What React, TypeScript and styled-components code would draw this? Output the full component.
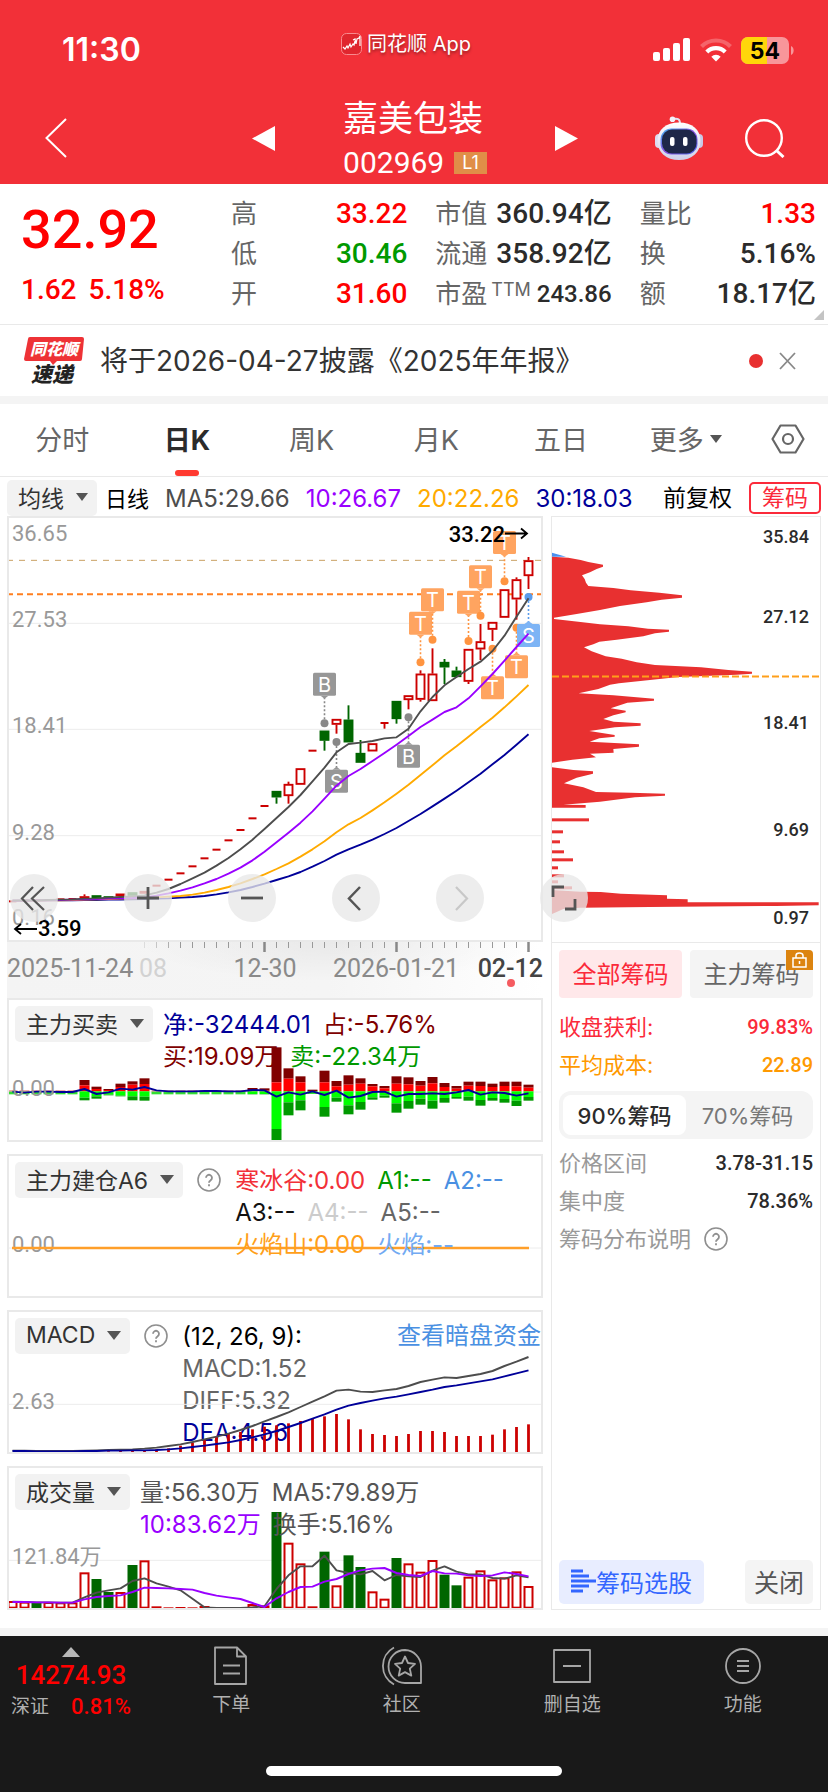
import React from "react";
import styled, { createGlobalStyle, css } from "styled-components";

const ui = `"Inter", "Noto Sans CJK SC", sans-serif`;
const num = `"Roboto", "Noto Sans CJK SC", sans-serif`;

const c = {
  header: "#f23038",
  red: "#ff0000",
  crimson: "#fb2a3a",
  green: "#009900",
  ink: "#2b2b2b",
  grey: "#666666",
  pale: "#999999",
  line: "#e9e9e9",
  fill: "#f4f4f4",
  bull: "#cc0000",
  bear: "#006600",
  navy: "#000099",
  violet: "#9900ff",
  amber: "#ffaa00",
  slate: "#4d4d4d",
  orange: "#ff9900",
  blue: "#4a90e2",
};

const GlobalStyle = createGlobalStyle`
  *, *::before, *::after { box-sizing: border-box; }
  body { margin: 0; background: #fff; color: ${c.ink}; font-family: ${ui}; }
  button { margin: 0; padding: 0; border: 0; background: none; color: inherit; font: inherit; cursor: pointer; }
  h1, p, dl, dd { margin: 0; font-weight: inherit; font-size: inherit; }
  svg { display: block; flex: none; }
`;

/* ---------- header ---------- */

const Page = styled.div`
  min-height: 100vh;
  display: flex;
  flex-direction: column;
`;

const Header = styled.header`
  background: ${c.header};
  color: #fff;
`;

const StatusBar = styled.div`
  display: grid;
  grid-template-columns: 1fr auto 1fr;
  align-items: center;
  height: 92px;
  padding: 8px 34px 0 18px;
`;

const Clock = styled.time`
  margin-left: 44px;
  font-size: 32px;
  line-height: 40px;
  font-weight: 600;
`;

const AppName = styled.div`
  display: flex;
  align-items: center;
  gap: 5px;
  padding-bottom: 12px;
  font-size: 20px;
  line-height: 24px;
  text-shadow: 0 2px 3px rgba(0, 0, 0, 0.4);
`;

const StatusIcons = styled.div`
  display: flex;
  justify-content: flex-end;
  align-items: center;
  gap: 9px;
`;

const TitleBar = styled.div`
  display: grid;
  grid-template-columns: 1fr auto 1fr;
  align-items: center;
  height: 92px;
  padding: 0 43px 0 45px;
`;

const TitleGroup = styled.div`
  display: flex;
  align-items: center;
  gap: 68px;
`;

const StockName = styled.h1`
  font-size: 35px;
  line-height: 46px;
`;

const StockCode = styled.div`
  display: flex;
  align-items: center;
  gap: 10px;
  margin-top: 4px;
  font: 400 30px/36px ${num};
`;

const LevelBadge = styled.span`
  padding: 0 8px;
  background: #e08e48;
  font: 400 18px/22px ${ui};
`;

const HeaderActions = styled.div`
  display: flex;
  justify-content: flex-end;
  align-items: center;
  gap: 42px;
`;

/* ---------- quote ---------- */

const Quote = styled.section`
  position: relative;
  display: grid;
  grid-template-columns: 182px repeat(3, 1fr);
  column-gap: 28px;
  padding: 10px 12px 10px 21px;
  border-bottom: 1px solid ${c.line};
`;

const Price = styled.div`
  color: ${c.red};
  font: 500 28px/36px ${num};
`;

const LastPrice = styled.div`
  font-size: 54px;
  line-height: 72px;
`;

const Change = styled.div`
  display: flex;
  gap: 12px;
  padding-top: 6px;
`;

const Stats = styled.dl`
  display: flex;
  flex-direction: column;
`;

const Stat = styled.div`
  display: flex;
  justify-content: space-between;
  line-height: 40px;
`;

const StatLabel = styled.dt`
  display: flex;
  color: ${c.grey};
  font-size: 26px;
`;

const Tiny = styled.span`
  margin-left: 4px;
  font-size: 18px;
  line-height: 32px;
`;

const StatValue = styled.dd<{ $color?: string; $small?: boolean }>`
  color: ${(p) => p.$color ?? c.ink};
  font-family: ${num};
  font-weight: 500;
  font-size: ${(p) => (p.$small ? 24 : 28)}px;
`;

const Corner = styled.span`
  position: absolute;
  right: 4px;
  bottom: 4px;
  border: 5px solid #c4c4c4;
  border-top-color: transparent;
  border-left-color: transparent;
`;

/* ---------- news and tabs ---------- */

const News = styled.section`
  display: flex;
  align-items: center;
  height: 79px;
  padding: 0 32px 0 24px;
  border-bottom: 8px solid ${c.fill};
`;

const NewsLink = styled.a`
  flex: 1;
  margin-left: 15px;
  color: #333;
  font-size: 28px;
  line-height: 40px;
  text-decoration: none;
`;

const UnreadDot = styled.span`
  width: 14px;
  height: 14px;
  margin-right: 16px;
  border-radius: 50%;
  background: #e83030;
`;

const Tabs = styled.nav`
  display: grid;
  grid-template-columns: repeat(6, 1fr) 80px;
  height: 73px;
  border-bottom: 1px solid ${c.line};
`;

const Tab = styled.button<{ $active?: boolean }>`
  position: relative;
  display: flex;
  align-items: center;
  justify-content: center;
  gap: 6px;
  padding-bottom: 3px;
  color: ${(p) => (p.$active ? c.ink : c.grey)};
  font-size: 27px;
  font-weight: ${(p) => (p.$active ? 700 : 400)};
  ${(p) =>
    p.$active &&
    css`
      &::after {
        content: "";
        position: absolute;
        bottom: 0;
        width: 24px;
        height: 6px;
        border-radius: 3px;
        background: #ff3a30;
      }
    `}
`;

const Arrow = styled.span<{ $small?: boolean }>`
  border: ${(p) => (p.$small ? 6 : 7)}px solid transparent;
  border-top: ${(p) => (p.$small ? 8 : 9)}px solid #555;
  border-bottom: 0;
`;

/* ---------- moving-average toolbar ---------- */

const Toolbar = styled.div`
  display: flex;
  align-items: center;
  height: 39px;
  padding: 2px 7px 0;
`;

const Picker = styled.button`
  display: flex;
  align-items: center;
  gap: 12px;
  height: 36px;
  padding: 0 9px 2px 11px;
  border-radius: 5px;
  background: #f2f2f2;
  color: #333;
  font-size: 23px;
  white-space: nowrap;
`;

const Averages = styled.div`
  display: flex;
  align-items: baseline;
  flex: 1;
  gap: 16px;
  padding: 0 0 2px 8px;
  font-size: 24px;
  white-space: nowrap;
`;

const Period = styled.span`
  color: #000;
  font-size: 22px;
`;

const Ink = styled.span<{ $color: string }>`
  color: ${(p) => p.$color};
`;

const Adjust = styled.button`
  padding-bottom: 3px;
  color: #000;
  font-size: 23px;
`;

const ChipToggle = styled.button`
  height: 32px;
  margin-left: 17px;
  padding: 0 11px;
  border: 2px solid ${c.crimson};
  border-radius: 5px;
  color: ${c.crimson};
  font-size: 23px;
  line-height: 26px;
`;

/* ---------- panels ---------- */

const Body = styled.main`
  position: relative;
  display: grid;
  grid-template-columns: 536fr 270fr;
  gap: 8px;
  padding: 0 7px 18px;
`;

const Charts = styled.div`
  min-width: 0;
`;

const Frame = styled.section`
  position: relative;
  border: 2px solid ${c.line};

  & + & {
    margin-top: 12px;
  }
`;

const Plot = styled.svg<{ $over?: boolean }>`
  position: relative;
  z-index: ${(p) => (p.$over ? 1 : 0)};
  width: 100%;
  height: auto;
  pointer-events: none;
`;

const FrameHeader = styled.div`
  position: absolute;
  top: 6px;
  left: 6px;
  right: 0;
  display: flex;
  align-items: flex-start;
  gap: 10px;
`;

const Readings = styled.div`
  padding-top: 3px;
  font-size: 24px;
  line-height: 32px;
  white-space: nowrap;
`;

const ReadingRow = styled.div`
  display: flex;
  gap: 12px;
`;

const HelpButton = styled.button`
  height: 36px;
  margin: 0 4px;
`;

const DarkPoolLink = styled.a`
  margin-left: auto;
  color: ${c.blue};
  font-size: 24px;
  line-height: 36px;
  text-decoration: none;
`;

const Controls = styled.div`
  position: absolute;
  z-index: 2;
  top: 358px;
  left: 10px;
  display: flex;
  gap: 56px;
`;

const Round = styled.button`
  width: 48px;
  height: 48px;
  border-radius: 50%;
  background: rgba(232, 232, 232, 0.78);

  &:first-child {
    margin-right: 10px;
  }
`;

/* ---------- chip distribution ---------- */

const ChipPanel = styled.aside`
  display: flex;
  flex-direction: column;
  min-width: 0;
  border: 1px solid ${c.line};
`;

const ChipPlot = styled.svg`
  width: 100%;
  height: auto;
  border-bottom: 1px solid ${c.line};
`;

const ChipBody = styled.div`
  display: flex;
  flex: 1;
  flex-direction: column;
  padding: 7px 7px 5px;
`;

const ChipTabs = styled.div`
  display: grid;
  grid-template-columns: 1fr 1fr;
  gap: 8px;
  margin-bottom: 10px;
`;

const ChipTab = styled.button<{ $active?: boolean }>`
  position: relative;
  height: 48px;
  padding-bottom: 3px;
  border-radius: 4px;
  background: ${(p) => (p.$active ? "#ffe8ea" : c.fill)};
  color: ${(p) => (p.$active ? c.crimson : c.grey)};
  font-size: 24px;
`;

const Lock = styled.span`
  position: absolute;
  top: 0;
  right: 0;
  padding: 2px 6px;
  border-radius: 0 4px 0 0;
  background: #dc8410;
`;

const ChipRow = styled.div<{ $color?: string }>`
  display: flex;
  justify-content: space-between;
  color: ${(p) => p.$color ?? c.pale};
  font-size: 22px;
  line-height: 38px;
`;

const ChipValue = styled.span<{ $color?: string }>`
  color: ${(p) => p.$color ?? c.ink};
  font-family: ${num};
  font-size: 20px;
  font-weight: 500;
`;

const Segment = styled.div`
  display: grid;
  grid-template-columns: 1fr 1fr;
  margin: 7px 0 5px;
  padding: 4px;
  border-radius: 12px;
  background: ${c.fill};
`;

const SegmentItem = styled.button<{ $active?: boolean }>`
  height: 40px;
  padding-bottom: 3px;
  border-radius: 8px;
  background: ${(p) => (p.$active ? "#fff" : "transparent")};
  color: ${(p) => (p.$active ? c.ink : "#777")};
  font-size: 22px;
  font-weight: ${(p) => (p.$active ? 500 : 400)};
  white-space: nowrap;
`;

const ChipHelp = styled.button`
  display: flex;
  align-items: center;
  gap: 13px;
  color: ${c.pale};
  font-size: 22px;
  line-height: 38px;
`;

const ChipFooter = styled.div`
  display: flex;
  justify-content: space-between;
  margin-top: auto;
`;

const FooterButton = styled.button<{ $primary?: boolean }>`
  display: flex;
  align-items: center;
  height: 44px;
  padding: 0 ${(p) => (p.$primary ? 12 : 9)}px 2px;
  border-radius: 5px;
  background: ${(p) => (p.$primary ? "#e8edff" : c.fill)};
  color: ${(p) => (p.$primary ? "#3366ff" : "#555")};
  font-size: ${(p) => (p.$primary ? 24 : 25)}px;
`;

/* ---------- bottom bar ---------- */

const BottomNav = styled.nav`
  display: grid;
  flex: 1;
  grid-template-columns: 146px repeat(4, 1fr);
  align-items: start;
  border-top: 8px solid ${c.fill};
  background: #191919;
  color: #b0b0b0;
  font-size: 19px;
`;

const NavItem = styled.button`
  display: flex;
  flex-direction: column;
  align-items: center;
  gap: 5px;
  padding-top: 10px;
  line-height: 28px;
`;

const IndexItem = styled.button`
  display: flex;
  flex-direction: column;
  align-items: center;
  padding: 11px 4px 0 0;
  color: ${c.red};
  font: 500 26px/36px ${num};
`;

const UpArrow = styled.span`
  border: 9px solid transparent;
  border-bottom: 10px solid #b8b8b8;
  border-top: 0;
`;

const IndexRow = styled.span`
  display: flex;
  gap: 22px;
  font-size: 22px;
  line-height: 28px;
`;

const IndexName = styled.span`
  color: #b0b0b0;
  font-size: 19px;
  font-weight: 400;
`;

const HomeArea = styled.footer`
  display: flex;
  justify-content: center;
  padding: 10px 0 16px;
  background: #191919;
`;

const HomeBar = styled.span`
  width: 296px;
  height: 10px;
  border-radius: 5px;
  background: #fff;
`;

/* ---------- chart data ---------- */

/* Levels are in thirds of a plot unit, measured downwards. */
const STEP = 12;
const cx = (i: number) => 5.5 + i * STEP;

const linePoints = (levels: number[], top: number) =>
  levels.map((v, i) => `${cx(i)},${(v - top) / 3}`).join(" ");

type Candle = [kind: "r" | "g", open: number, close: number, high: number, low: number];

const candles: Candle[] = [
  ["r", 1173, 1176, 1173, 1176],
  ["r", 1171, 1174, 1171, 1174],
  ["r", 1170, 1173, 1170, 1173],
  ["r", 1169, 1172, 1169, 1172],
  ["r", 1167, 1170, 1167, 1170],
  ["r", 1166, 1169, 1166, 1169],
  ["r", 1159, 1164, 1153, 1166],
  ["g", 1156, 1163, 1156, 1163],
  ["g", 1159, 1165, 1159, 1165],
  ["r", 1151, 1156, 1151, 1156],
  ["g", 1147, 1157, 1147, 1157],
  ["r", 1143, 1150, 1143, 1150],
  ["r", 1126, 1129, 1126, 1129],
  ["r", 1108, 1111, 1108, 1111],
  ["r", 1089, 1092, 1089, 1092],
  ["r", 1068, 1071, 1068, 1071],
  ["r", 1044, 1047, 1044, 1047],
  ["r", 1018, 1021, 1018, 1021],
  ["r", 990, 993, 990, 993],
  ["r", 959, 962, 959, 962],
  ["r", 924, 927, 924, 927],
  ["r", 887, 890, 887, 890],
  ["g", 843, 862, 843, 881],
  ["r", 822, 858, 815, 881],
  ["r", 775, 824, 775, 824],
  ["r", 721, 724, 721, 724],
  ["g", 662, 692, 662, 722],
  ["r", 627, 644, 627, 671],
  ["g", 629, 697, 586, 697],
  ["g", 729, 758, 690, 758],
  ["r", 700, 724, 700, 724],
  ["r", 638, 641, 638, 656],
  ["g", 573, 627, 573, 641],
  ["r", 556, 570, 556, 598],
  ["r", 491, 569, 481, 575],
  ["r", 491, 573, 415, 573],
  ["g", 456, 472, 447, 522],
  ["g", 482, 501, 470, 501],
  ["r", 417, 515, 417, 522],
  ["r", 394, 418, 342, 450],
  ["r", 336, 359, 336, 393],
  ["r", 238, 323, 238, 323],
  ["r", 208, 268, 202, 329],
  ["r", 151, 198, 141, 237],
];

const ma5 = [1172, 1171, 1171, 1170, 1169, 1168, 1166, 1165, 1163, 1161, 1159, 1156, 1148, 1137, 1122, 1105, 1088, 1067, 1044, 1018, 989, 957, 924, 891, 855, 814, 773, 727, 702, 698, 693, 685, 682, 656, 604, 561, 526, 501, 477, 455, 423, 377, 320, 265];
const ma10 = [1172, 1172, 1171, 1171, 1170, 1169, 1168, 1167, 1166, 1165, 1164, 1162, 1157, 1150, 1142, 1132, 1120, 1107, 1091, 1073, 1051, 1025, 997, 968, 938, 904, 866, 827, 798, 777, 753, 729, 704, 678, 651, 629, 606, 592, 565, 529, 492, 452, 411, 371];
const ma20 = [1172, 1172, 1172, 1171, 1171, 1170, 1169, 1168, 1167, 1166, 1165, 1164, 1162, 1160, 1158, 1154, 1148, 1140, 1131, 1120, 1107, 1093, 1077, 1060, 1040, 1018, 994, 967, 943, 924, 901, 877, 851, 824, 795, 766, 736, 709, 680, 651, 623, 592, 559, 525];
const ma30 = [1172, 1172, 1172, 1171, 1171, 1171, 1170, 1170, 1169, 1169, 1168, 1167, 1166, 1165, 1163, 1161, 1158, 1153, 1147, 1140, 1131, 1121, 1110, 1099, 1086, 1070, 1053, 1034, 1018, 1004, 989, 972, 954, 933, 912, 889, 866, 842, 817, 791, 763, 735, 704, 673];

type Marker = { i: number; box: number; dot: number; letter: string; color: string; link: string };
const T = { letter: "T", color: "#ffa460", link: "#ff9440" };
const markers: Marker[] = [
  { i: 26, box: 488, dot: 640, letter: "B", color: "#979797", link: "#888" },
  { i: 27, box: 779, dot: 696, letter: "S", color: "#979797", link: "#888" },
  { i: 33, box: 704, dot: 622, letter: "B", color: "#979797", link: "#888" },
  { i: 34, box: 305, dot: 457, ...T },
  { i: 35, box: 235, dot: 389, ...T },
  { i: 38, box: 242, dot: 393, ...T },
  { i: 39, box: 166, dot: 317, ...T },
  { i: 40, box: 499, dot: 416, ...T },
  { i: 41, box: 63, dot: 214, ...T },
  { i: 42, box: 436, dot: 353, ...T },
  { i: 43, box: 342, dot: 261, letter: "S", color: "#7db4f5", link: "#5a9cec" },
];

/* [bar index, buy top, large-buy split, large-sell split, sell bottom] */
const flows: number[][] = [
  [6, 601, 617, 654, 662], [7, 621, 628, 650, 657], [8, 628, 631, 645, 647], [9, 612, 622, 648, 650],
  [10, 605, 615, 650, 662], [11, 596, 613, 651, 663], [20, 625, 632, 643, 644], [21, 626, 633, 643, 644],
  [22, 503, 608, 748, 785], [23, 566, 597, 668, 707], [24, 590, 608, 662, 692], [25, 630, 634, 642, 643],
  [26, 573, 608, 682, 711], [27, 604, 620, 654, 666], [28, 587, 615, 677, 704], [29, 596, 612, 667, 690],
  [30, 613, 620, 653, 660], [31, 619, 626, 648, 654], [32, 590, 612, 671, 699], [33, 593, 614, 664, 687],
  [34, 604, 618, 657, 675], [35, 592, 611, 663, 687], [36, 610, 622, 655, 669], [37, 619, 627, 652, 657],
  [38, 606, 618, 651, 663], [39, 606, 619, 661, 678], [40, 612, 622, 655, 663], [41, 606, 619, 658, 669],
  [42, 606, 620, 663, 679], [43, 615, 624, 652, 663],
];
const quietDays = [0, 1, 2, 3, 4, 5, 12, 13, 14, 15, 16, 17, 18, 19];
const net = [636, 639, 636, 636, 637, 637, 628, 643, 638, 627, 630, 622, 632, 635, 635, 635, 634, 634, 635, 635, 631, 632, 651, 638, 645, 635, 646, 633, 654, 649, 637, 636, 651, 643, 643, 641, 643, 638, 631, 645, 638, 640, 648, 641];

const macdTops = [460, 460, 460, 459, 459, 459, 456, 455, 454, 453, 452, 451, 448, 445, 437, 428, 420, 410, 402, 396, 388, 380, 376, 370, 363, 356, 349, 342, 358, 388, 402, 405, 408, 402, 393, 393, 396, 408, 408, 408, 404, 388, 381, 373];
const diff = [452, 452, 453, 453, 453, 453, 452, 451, 450, 449, 448, 446, 443, 438, 433, 426, 418, 410, 401, 390, 378, 364, 351, 337, 321, 305, 289, 272, 269, 275, 276, 271, 267, 258, 246, 239, 232, 234, 228, 222, 213, 198, 185, 171];
const dea = [453, 453, 454, 454, 454, 454, 453, 453, 452, 452, 451, 451, 450, 448, 445, 441, 437, 432, 427, 420, 412, 403, 393, 381, 369, 356, 343, 329, 317, 309, 302, 295, 290, 283, 276, 269, 261, 256, 250, 244, 238, 229, 220, 211];

const volume = "903r 905r 907g 906r 907r 907r 817r 837g 876g 876r 795g 781r 919r 922r 921r 922r 918r 921r 921r 921r 912r 916r 636g 728r 790r 919r 755g 856r 766g 801g 874r 896r 774g 790r 815r 780r 824g 856g 830r 811r 838r 832r 814r 858r"
  .split(" ")
  .map((s) => ({ top: parseInt(s, 10), up: s.endsWith("r") }));
const volMa5 = [905, 906, 907, 907, 908, 908, 892, 878, 871, 865, 843, 835, 850, 860, 871, 896, 922, 924, 924, 924, 922, 919, 867, 826, 799, 799, 767, 811, 819, 823, 813, 841, 825, 829, 831, 812, 799, 815, 823, 823, 834, 836, 826, 832];
const volMa10 = [906, 906, 907, 907, 908, 908, 898, 891, 888, 886, 876, 863, 864, 865, 867, 869, 879, 887, 892, 897, 909, 921, 895, 876, 861, 860, 845, 837, 822, 811, 806, 804, 819, 825, 828, 813, 820, 821, 826, 828, 826, 817, 822, 829];

/* ---------- chart drawings ---------- */

const AxisText = ({ y, children, x = 5 }: { y: number; x?: number; children: string }) => (
  <text x={x} y={y} fill={c.pale} fontFamily={num} fontSize="22">
    {children}
  </text>
);

const GridLine = ({ y }: { y: number }) => <path d={`M0 ${y}H536`} stroke="#ececec" strokeWidth="1" />;

const Curve = ({ levels, top, color }: { levels: number[]; top: number; color: string }) => (
  <polyline points={linePoints(levels, top)} fill="none" stroke={color} strokeWidth="1.9" strokeLinejoin="round" />
);

const KLine = () => {
  const y = (v: number) => (v - 18) / 3;
  return (
    <Plot viewBox="2 2 532 422" role="img" aria-label="日K线">
      {[340, 658, 977].map((v) => <GridLine key={v} y={y(v)} />)}
      <AxisText y={25}>36.65</AxisText>
      <AxisText y={111}>27.53</AxisText>
      <AxisText y={217}>18.41</AxisText>
      <AxisText y={324}>9.28</AxisText>
      <AxisText y={409}>0.16</AxisText>
      <path d={`M0 ${y(151)}H536`} stroke="#c9a063" strokeWidth="1" strokeDasharray="6 6" />
      <path d={`M0 ${y(253)}H536`} stroke="#ff7f1f" strokeWidth="2" strokeDasharray="6 4" />
      {candles.map(([kind, a, b, hi, lo], i) => {
        const thin = b - a <= 3;
        const color = kind === "r" ? c.bull : c.bear;
        return (
          <g key={i} stroke={color} strokeWidth="1.9">
            {hi < a && <path d={`M${cx(i)} ${y(hi)}V${y(a)}`} />}
            {lo > b && <path d={`M${cx(i)} ${y(b)}V${y(lo)}`} />}
            {thin ? (
              <path d={`M${cx(i) - 4} ${y(a + 1)}h8`} strokeWidth="2" />
            ) : (
              <rect x={cx(i) - 4} y={y(a) + 0.8} width="8" height={Math.max(y(b) - y(a) - 1.6, 1)} fill={kind === "r" ? "#fff" : color} />
            )}
          </g>
        );
      })}
      {markers.map((m) => {
        const below = m.box > m.dot;
        const top = y(m.box);
        const edge = below ? top : top + 23;
        const dir = below ? -3 : 3;
        return (
          <g key={m.i} fill={m.color}>
            <path d={`M${cx(m.i)} ${y(m.dot)}V${edge}`} stroke={m.link} strokeWidth="1.6" strokeDasharray="2 2" />
            <circle cx={cx(m.i)} cy={y(m.dot)} r="4" fill={m.link} />
            <rect x={cx(m.i) - 11.5} y={top} width="23" height="23" rx="1.5" />
            <path d={`M${cx(m.i) - 4} ${edge}h8l-4 ${dir}z`} />
            <text x={cx(m.i)} y={top + 19} fill="#fff" fontFamily={ui} fontSize="20" textAnchor="middle">
              {m.letter}
            </text>
          </g>
        );
      })}
      <Curve levels={ma30} top={18} color={c.navy} />
      <Curve levels={ma20} top={18} color={c.amber} />
      <Curve levels={ma10} top={18} color={c.violet} />
      <Curve levels={ma5} top={18} color={c.slate} />
      <g fontFamily={num} fontSize="22" fontWeight="500">
        <text x="498" y="26" textAnchor="end">33.22</text>
        <text x="31" y="420">3.59</text>
      </g>
      <g fill="none" stroke="#000" strokeWidth="1.8">
        <path d="M498 17.500h22M514 12.500l6 5-6 5" />
        <path d="M30 413h-22M14 408l-6 5 6 5" />
      </g>
    </Plot>
  );
};

const DateAxis = () => (
  <Plot viewBox="0 0 536 56" role="img" aria-label="日期轴">
    <defs>
      <linearGradient id="axisFill">
        <stop offset="0" stopColor="#f4f4f4" />
        <stop offset="0.6" stopColor="#f5f5f5" />
        <stop offset="1" stopColor="#ffffff" />
      </linearGradient>
      <radialGradient id="axisShade" cx="0.5" cy="0" r="0.5" gradientTransform="translate(0 0) scale(1 2)">
        <stop offset="0" stopColor="#000" stopOpacity="0.05" />
        <stop offset="1" stopColor="#000" stopOpacity="0" />
      </radialGradient>
    </defs>
    <rect width="536" height="56" fill="url(#axisFill)" />
    <rect x="130" width="400" height="40" fill="url(#axisShade)" />
    {Array.from({ length: 33 }, (_, k) => {
      const i = k + 11;
      const major = i === 21 || i === 32 || i === 43;
      return (
        <path
          key={i}
          d={`M${cx(i)} 0v${major ? 10 : 6}`}
          stroke={major ? "#888" : "#999"}
          strokeWidth={major ? 2.5 : 1}
          opacity={Math.min(1, (k + 1) / 4)}
        />
      );
    })}
    <g fontFamily={num} fontSize="25" fill="#8a8a8a">
      <text x="0" y="35">2025-11-24</text>
      <text x="132" y="35" fill="#d2d2d2">08</text>
      <text x="258" y="35" textAnchor="middle">12-30</text>
      <text x="389" y="35" textAnchor="middle">2026-01-21</text>
      <text x="536" y="35" textAnchor="end" fill="#444" fontWeight="500">02-12</text>
    </g>
    <circle cx="504" cy="41" r="4" fill="#f55b60" />
  </Plot>
);

const FlowPlot = () => {
  const y = (v: number) => (v - 355) / 3;
  const bar = (i: number, a: number, b: number, fill: string) => (
    <rect x={cx(i) - 5} y={y(a)} width="10" height={y(b) - y(a)} fill={fill} />
  );
  return (
    <Plot $over viewBox="2 2 532 140" role="img" aria-label="主力买卖">
      <GridLine y={y(637)} />
      {quietDays.map((i) => <g key={i}>{bar(i, 633, 635, c.bull)}{bar(i, 636, 644, "#33dd33")}</g>)}
      {flows.map(([i, top, up, down, low]) => (
        <g key={i}>
          {bar(i, top, up, "#800000")}
          {bar(i, up, 635, "#ff0000")}
          {bar(i, 635, down, "#00ff00")}
          {bar(i, down, low, "#009900")}
        </g>
      ))}
      <Curve levels={net} top={355} color={c.navy} />
      <AxisText y={98}>0.00</AxisText>
    </Plot>
  );
};

const BuildPlot = () => (
  <Plot viewBox="2 2 532 140" role="img" aria-label="主力建仓">
    <GridLine y={94} />
    <AxisText y={98}>0.00</AxisText>
    <path d="M5 94H522" stroke="#ff9f2a" strokeWidth="2.5" />
  </Plot>
);

const MacdPlot = () => {
  const y = (v: number) => (v - 30) / 3;
  return (
    <Plot $over viewBox="2 2 532 140" role="img" aria-label="MACD">
      <GridLine y={y(313)} />
      <AxisText y={99}>2.63</AxisText>
      {macdTops.map((v, i) => (
        <path key={i} d={`M${cx(i)} ${y(457)}V${y(v)}`} stroke={i < 6 ? c.bear : c.bull} strokeWidth="2.8" />
      ))}
      <Curve levels={diff} top={30} color={c.slate} />
      <Curve levels={dea} top={30} color={c.navy} />
    </Plot>
  );
};

const VolumePlot = () => {
  const y = (v: number) => (v - 498) / 3;
  return (
    <Plot viewBox="2 2 532 140" role="img" aria-label="成交量">
      <GridLine y={y(781)} />
      <AxisText y={98}>121.84万</AxisText>
      {volume.map(({ top, up }, i) => (
        <rect
          key={i}
          x={cx(i) - 4}
          y={y(top) + 1}
          width="8"
          height={Math.max(y(926) - y(top) - 2, 1)}
          fill={up ? "#fff" : c.bear}
          stroke={up ? c.bull : c.bear}
          strokeWidth="2"
        />
      ))}
      <Curve levels={volMa5} top={498} color={c.slate} />
      <Curve levels={volMa10} top={498} color={c.violet} />
    </Plot>
  );
};

/* Outline of the distribution, in thirds of a plot unit. */
const chipUpper = "36,140 85,143 122,150 145,156 189,164 189,170 170,177 150,187 126,196 134,207 138,218 145,228 220,234 272,241 358,248 426,256 426,263 365,269 320,277 240,288 180,300 110,312 42,323 42,327 115,335 180,343 265,349 324,356 387,359 387,365 345,370 310,379 230,389 178,395 160,403 132,412 155,424 197,439 245,446 290,457 345,465 483,472 565,480 636,485 636,491 590,494 415,501 330,510 237,520 210,524 175,537 116,550 220,556 342,566 342,572 262,578 212,595 257,602 257,607 220,616 190,627 221,635 302,640 302,647 225,652 148,663 224,675 224,680 178,685 149,695 297,703 297,710 220,717 221,728 150,731 168,742 97,749 36,758";
const chipLower = "36,772 100,780 159,784 159,791 110,803 72,820 130,832 168,846 273,848 375,851 375,857 285,862 180,875 70,884 137,885 137,893 36,893";
const chipBase = "36,1140 120,1145 182,1146 243,1151 381,1156 381,1166 443,1168 443,1177 836,1177 836,1186 708,1188 330,1191 120,1193 70,1197 50,1206 36,1212";
const chipBars = [[147, 929], [69, 965], [60, 995], [72, 1025], [99, 1049], [54, 1073], [72, 1097], [54, 1115], [96, 1133]];

const ChipChart = () => (
  <ChipPlot viewBox="0 0 268 425" role="img" aria-label="筹码分布">
    <g transform="scale(0.33333) translate(-36 -21)" fill="#e83030">
      <path d="M36 128l42 12H36z" fill="#4a90f0" />
      <polygon points={chipUpper} />
      <polygon points={chipLower} />
      <polygon points={chipBase} />
      {chipBars.map(([w, v]) => <rect key={v} x="36" y={v - 4} width={w - 36} height="9" />)}
    </g>
    <path d="M0 159.500H268" stroke="#ff9f1a" strokeWidth="2" strokeDasharray="7 3" />
    <g fontFamily={num} fontSize="18" fontWeight="500" fill={c.ink} textAnchor="end">
      <text x="257" y="26">35.84</text>
      <text x="257" y="106">27.12</text>
      <text x="257" y="212">18.41</text>
      <text x="257" y="319">9.69</text>
      <text x="257" y="407">0.97</text>
    </g>
  </ChipPlot>
);

/* ---------- icons ---------- */

const HelpIcon = () => (
  <svg width="24" height="24" viewBox="0 0 24 24" fill="none" stroke="#8f8f8f" strokeWidth="1.6">
    <circle cx="12" cy="12" r="11" />
    <path d="M9 9.800a3 3 0 1 1 4.500 2.600c-1.100.7-1.500 1.100-1.500 2.300M12 16.200v2" strokeWidth="1.8" />
  </svg>
);

const ControlIcon = ({ d, color = "#555", width = 2.2 }: { d: string; color?: string; width?: number }) => (
  <svg width="48" height="48" viewBox="0 0 48 48" fill="none" stroke={color} strokeWidth={width}>
    <path d={d} />
  </svg>
);

const NavIcon = ({ children }: { children: React.ReactNode }) => (
  <svg width="42" height="40" viewBox="0 0 42 40" fill="none" stroke="#a6a6a6" strokeWidth="1.8" strokeLinejoin="round">
    {children}
  </svg>
);

const RobotIcon = () => (
  <svg width="48" height="44" viewBox="0 0 48 44">
    <defs>
      <linearGradient id="shell" x2="0" y2="1">
        <stop offset="0" stopColor="#ffffff" />
        <stop offset="1" stopColor="#cfd0ea" />
      </linearGradient>
      <linearGradient id="visor" x2="1" y2="1">
        <stop offset="0" stopColor="#3fb4f0" />
        <stop offset="0.5" stopColor="#8a4fe0" />
        <stop offset="1" stopColor="#4a6bea" />
      </linearGradient>
    </defs>
    <path d="M18 3c5-1 7 0 7 5" fill="none" stroke="#e4e2f2" strokeWidth="2" />
    <circle cx="17.500" cy="3.200" r="2.800" fill="#f3f0fa" />
    <rect x="0" y="18" width="8" height="14" rx="4" fill="#dcdcf0" />
    <rect x="40" y="18" width="8" height="14" rx="4" fill="#c9c9e6" />
    <path d="M24 6.500c13 0 21.500 7 21.500 18.500S37 44 24 44 2.500 36.500 2.500 25 11 6.500 24 6.500z" fill="url(#shell)" />
    <rect x="5.500" y="12.500" width="37" height="26" rx="11" fill="url(#visor)" />
    <rect x="7" y="13.500" width="34.500" height="24" rx="10" fill="#1e2748" />
    <rect x="15" y="21" width="4.500" height="9" rx="2" fill="#fff" />
    <rect x="28" y="21" width="4.500" height="9" rx="2" fill="#fff" />
  </svg>
);

const quoteColumns = [
  [["高", "33.22", c.red], ["低", "30.46", c.green], ["开", "31.60", c.red]],
  [["市值", "360.94亿"], ["流通", "358.92亿"], ["市盈", "243.86"]],
  [["量比", "1.33", c.red], ["换", "5.16%"], ["额", "18.17亿"]],
];

export default function App() {
  return (
    <Page>
      <GlobalStyle />
      <Header>
        <StatusBar>
          <Clock>11:30</Clock>
          <AppName>
            <svg width="21" height="22" viewBox="0 0 21 22">
              <rect x="0.500" y="0.500" width="20" height="21" rx="5" fill="#e0262e" stroke="#f88a8e" />
              <path d="M2 14l2 2 2-3 1 2 2-4 1 3 2-3 1 1 1-4M12 7l2-1 1 5 1-5 2-1 1-2v10" fill="none" stroke="#fff" strokeWidth="1.2" />
            </svg>
            同花顺 App
          </AppName>
          <StatusIcons>
            <svg width="38" height="24" viewBox="0 0 38 24" fill="#fff">
              <rect x="0" y="14" width="7" height="9" rx="2" />
              <rect x="10" y="10" width="7" height="13" rx="2" />
              <rect x="20" y="5" width="7" height="18" rx="2" />
              <rect x="30" y="0" width="7" height="23" rx="2" />
            </svg>
            <svg width="32" height="24" viewBox="0 0 32 24" fill="none" strokeWidth="4.2">
              <path d="M1.500 8.500a20.500 20.500 0 0 1 29 0" stroke="#fff" opacity="0.25" />
              <path d="M6.800 14a13 13 0 0 1 18.400 0" stroke="#fff" />
              <path d="M16 23.500l-4.700-4.700a6.600 6.600 0 0 1 9.400 0z" fill="#fff" />
            </svg>
            <svg width="53" height="27" viewBox="0 0 53 27">
              <rect width="48" height="27" rx="7" fill="#f8969a" />
              <path d="M7 0h19v27H7a7 7 0 0 1-7-7V7a7 7 0 0 1 7-7z" fill="#ffd60a" />
              <path d="M50 9c3.500 1.500 3.500 7.500 0 9z" fill="#f8969a" />
              <text x="24" y="22" fontFamily={ui} fontWeight="700" fontSize="23" textAnchor="middle">54</text>
            </svg>
          </StatusIcons>
        </StatusBar>
        <TitleBar>
          <button aria-label="返回">
            <svg width="22" height="40" viewBox="0 0 22 40" fill="none" stroke="#fff" strokeWidth="2">
              <path d="M21 1L1.500 20 21 39" />
            </svg>
          </button>
          <TitleGroup>
            <button aria-label="上一只">
              <svg width="23" height="25" viewBox="0 0 23 25" fill="#fff"><path d="M23 0v25L0 12.500z" /></svg>
            </button>
            <div>
              <StockName>嘉美包装</StockName>
              <StockCode>002969<LevelBadge>L1</LevelBadge></StockCode>
            </div>
            <button aria-label="下一只">
              <svg width="23" height="25" viewBox="0 0 23 25" fill="#fff"><path d="M0 0v25l23-12.500z" /></svg>
            </button>
          </TitleGroup>
          <HeaderActions>
            <button aria-label="智能助手"><RobotIcon /></button>
            <button aria-label="搜索">
              <svg width="40" height="40" viewBox="0 0 40 40" fill="none" stroke="#fff" strokeWidth="2.4">
                <circle cx="19" cy="20" r="17.800" />
                <path d="M31.500 32.500l7 6.500" strokeWidth="3" />
              </svg>
            </button>
          </HeaderActions>
        </TitleBar>
      </Header>

      <Quote>
        <Price>
          <LastPrice>32.92</LastPrice>
          <Change><span>1.62</span><span>5.18%</span></Change>
        </Price>
        {quoteColumns.map((rows, k) => (
          <Stats key={k}>
            {rows.map(([label, value, color]) => (
              <Stat key={label}>
                <StatLabel>{label}{label === "市盈" && <Tiny>TTM</Tiny>}</StatLabel>
                <StatValue $color={color} $small={label === "市盈"}>{value}</StatValue>
              </Stat>
            ))}
          </Stats>
        ))}
        <Corner />
      </Quote>

      <News>
        <svg width="61" height="50" viewBox="0 0 61 50" fontFamily={num} fontWeight="900" fontStyle="italic">
          <path d="M6 1h52a2 2 0 0 1 2 2l-2 20a2 2 0 0 1-2 2H33l-4 4-3-4H2a2 2 0 0 1-2-2L4 3a2 2 0 0 1 2-2z" fill="#ee3236" />
          <text x="30" y="19" fontSize="16" fill="#fff" textAnchor="middle">同花顺</text>
          <text x="28" y="46" fontSize="21" fill="#222" textAnchor="middle">速递</text>
        </svg>
        <NewsLink href="#report">将于2026-04-27披露《2025年年报》</NewsLink>
        <UnreadDot />
        <button aria-label="关闭公告">
          <svg width="17" height="18" viewBox="0 0 17 18" stroke="#888" strokeWidth="1.8"><path d="M1 1l15 16M16 1L1 17" /></svg>
        </button>
      </News>

      <Tabs>
        <Tab>分时</Tab>
        <Tab $active aria-current="page">日K</Tab>
        <Tab>周K</Tab>
        <Tab>月K</Tab>
        <Tab>五日</Tab>
        <Tab>更多<Arrow $small /></Tab>
        <Tab aria-label="设置">
          <svg width="34" height="30" viewBox="0 0 34 30" fill="none" stroke="#666" strokeWidth="2.2" strokeLinejoin="round">
            <path d="M9.500 1.500h15l8 13.500-8 13.500h-15L1.500 15z" />
            <circle cx="17" cy="15" r="5" />
          </svg>
        </Tab>
      </Tabs>

      <Toolbar>
        <Picker>均线<Arrow $small /></Picker>
        <Averages>
          <Period>日线</Period>
          <Ink $color={c.slate}>MA5:29.66</Ink>
          <Ink $color={c.violet}>10:26.67</Ink>
          <Ink $color={c.amber}>20:22.26</Ink>
          <Ink $color={c.navy}>30:18.03</Ink>
        </Averages>
        <Adjust>前复权</Adjust>
        <ChipToggle>筹码</ChipToggle>
      </Toolbar>

      <Body>
        <Charts>
          <Frame as="div"><KLine /></Frame>
          <DateAxis />
          <Frame>
            <FrameHeader>
              <Picker>主力买卖<Arrow /></Picker>
              <Readings>
                <ReadingRow><Ink $color={c.navy}>净:-32444.01</Ink><Ink $color="#800000">占:-5.76%</Ink></ReadingRow>
                <ReadingRow><Ink $color="#800000">买:19.09万</Ink><Ink $color={c.green}>卖:-22.34万</Ink></ReadingRow>
              </Readings>
            </FrameHeader>
            <FlowPlot />
          </Frame>
          <Frame>
            <BuildPlot />
            <FrameHeader>
              <Picker>主力建仓A6<Arrow /></Picker>
              <HelpButton aria-label="主力建仓说明"><HelpIcon /></HelpButton>
              <Readings>
                <ReadingRow><Ink $color="#f23038">寒冰谷:0.00</Ink><Ink $color={c.green}>A1:--</Ink><Ink $color={c.blue}>A2:--</Ink></ReadingRow>
                <ReadingRow><Ink $color="#111">A3:--</Ink><Ink $color="#cccccc">A4:--</Ink><Ink $color={c.grey}>A5:--</Ink></ReadingRow>
                <ReadingRow><Ink $color="#ff9f1a">火焰山:0.00</Ink><Ink $color="#72aaf2">火焰:--</Ink></ReadingRow>
              </Readings>
            </FrameHeader>
          </Frame>
          <Frame>
            <FrameHeader>
              <Picker>MACD<Arrow /></Picker>
              <HelpButton aria-label="MACD说明"><HelpIcon /></HelpButton>
              <Readings>
                <Ink as="div" $color="#000">(12, 26, 9):</Ink>
                <Ink as="div" $color={c.grey}>MACD:1.52</Ink>
                <Ink as="div" $color={c.grey}>DIFF:5.32</Ink>
                <Ink as="div" $color={c.navy}>DEA:4.56</Ink>
              </Readings>
              <DarkPoolLink href="#dark-pool">查看暗盘资金</DarkPoolLink>
            </FrameHeader>
            <MacdPlot />
          </Frame>
          <Frame>
            <VolumePlot />
            <FrameHeader>
              <Picker>成交量<Arrow /></Picker>
              <Readings>
                <ReadingRow><Ink $color="#555">量:56.30万</Ink><Ink $color="#555">MA5:79.89万</Ink></ReadingRow>
                <ReadingRow><Ink $color={c.violet}>10:83.62万</Ink><Ink $color="#555">换手:5.16%</Ink></ReadingRow>
              </Readings>
            </FrameHeader>
          </Frame>
        </Charts>

        <ChipPanel>
          <ChipChart />
          <ChipBody>
            <ChipTabs>
              <ChipTab $active>全部筹码</ChipTab>
              <ChipTab>
                主力筹码
                <Lock>
                  <svg width="15" height="16" viewBox="0 0 15 16" fill="none" stroke="#fff" strokeWidth="1.5">
                    <path d="M1 6h13v9H1zM4 6V3.500a3.500 2.500 0 0 1 7 0V6M7.500 9v3" />
                  </svg>
                </Lock>
              </ChipTab>
            </ChipTabs>
            <ChipRow $color={c.crimson}>收盘获利:<ChipValue $color={c.crimson}>99.83%</ChipValue></ChipRow>
            <ChipRow $color={c.orange}>平均成本:<ChipValue $color={c.orange}>22.89</ChipValue></ChipRow>
            <Segment>
              <SegmentItem $active aria-pressed="true">90%筹码</SegmentItem>
              <SegmentItem aria-pressed="false">70%筹码</SegmentItem>
            </Segment>
            <ChipRow>价格区间<ChipValue>3.78-31.15</ChipValue></ChipRow>
            <ChipRow>集中度<ChipValue>78.36%</ChipValue></ChipRow>
            <ChipHelp>筹码分布说明<HelpIcon /></ChipHelp>
            <ChipFooter>
              <FooterButton $primary>
                <svg width="25" height="24" viewBox="0 0 25 24" stroke="#3366ff" strokeWidth="3">
                  <path d="M0 2h12M0 7h18M0 12h25M0 17h18M0 22h12" />
                </svg>
                筹码选股
              </FooterButton>
              <FooterButton>关闭</FooterButton>
            </ChipFooter>
          </ChipBody>
        </ChipPanel>

        <Controls>
          <Round aria-label="快退"><ControlIcon d="M23 13L12 24.500 23 36M34 13L22 24.500 34 36" /></Round>
          <Round aria-label="放大"><ControlIcon d="M13 24h22M24 13v22" width={2.8} /></Round>
          <Round aria-label="缩小"><ControlIcon d="M13 24h22" width={2.8} /></Round>
          <Round aria-label="向前"><ControlIcon d="M28 13L17 24.500 28 36" width={2.5} /></Round>
          <Round aria-label="向后" disabled><ControlIcon d="M20 13l11 11.500L20 36" color="#c8c8c8" /></Round>
          <Round aria-label="全屏"><ControlIcon d="M13 23V13h11M35 25v10H25" width={2.8} /></Round>
        </Controls>
      </Body>

      <BottomNav>
        <IndexItem>
          <UpArrow />
          14274.93
          <IndexRow><IndexName>深证</IndexName>0.81%</IndexRow>
        </IndexItem>
        <NavItem>
          <NavIcon><path d="M5 1.500h22l9 9V38H5zM27 1.500v9h9M13 19.500h17M13 27.500h17" /></NavIcon>
          下单
        </NavItem>
        <NavItem>
          <NavIcon>
            <path d="M13 1.500a21 21 0 0 0 0 37M24 4a16.500 16.500 0 1 0 0 33h16V20.500A16.500 16.500 0 0 0 24 4z" />
            <path d="M24 10.500l3 6.500 7 .8-5.200 4.800 1.500 7-6.300-3.500-6.300 3.500 1.500-7-5.200-4.800 7-.8z" />
          </NavIcon>
          社区
        </NavItem>
        <NavItem>
          <NavIcon><path d="M3 4h36v32H3zM12 20h18" /></NavIcon>
          删自选
        </NavItem>
        <NavItem>
          <NavIcon><circle cx="21" cy="20" r="17" /><path d="M15 15h12M15 20h12M15 25h12" /></NavIcon>
          功能
        </NavItem>
      </BottomNav>
      <HomeArea><HomeBar /></HomeArea>
    </Page>
  );
}
